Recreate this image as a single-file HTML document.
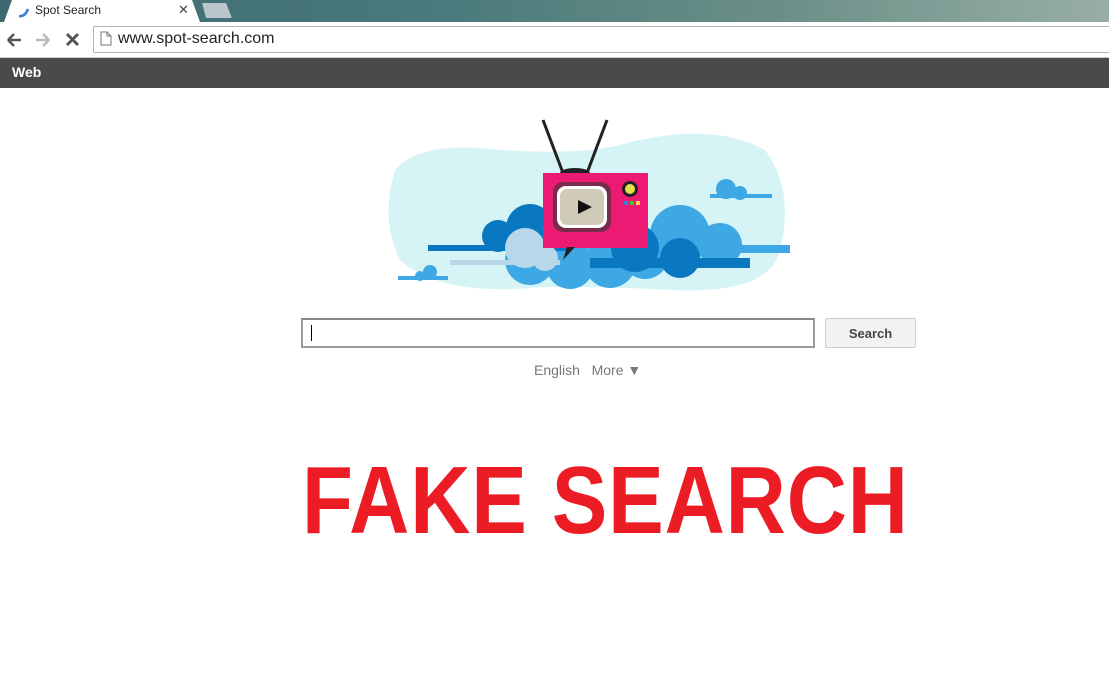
<!DOCTYPE html>
<html><head><meta charset="utf-8"><style>
body{margin:0;width:1109px;height:692px;overflow:hidden;background:#fff;font-family:"Liberation Sans",Arial,sans-serif;position:relative}
.tabbar{position:absolute;left:0;top:0;width:1109px;height:22px;background:linear-gradient(90deg,#3d6a72 0%,#4a7a7c 40%,#6a8f86 70%,#98aea8 100%)}
.tab{position:absolute;left:4px;top:0;width:196px;height:22px;background:#fff;clip-path:polygon(0 100%,8px 0,188px 0,196px 100%)}
.tab2{position:absolute;left:202px;top:3px;width:30px;height:15px;background:#b9c6cc;clip-path:polygon(0 0,24px 0,30px 100%,4px 100%);border-radius:2px}
.toolbar{position:absolute;left:0;top:22px;width:1109px;height:35px;background:#fff;border-bottom:1px solid #ccc}
.omni{position:absolute;left:93px;top:26px;width:1030px;height:25px;border:1px solid #b5b5b5;border-radius:2px;background:#fff}
.url{position:absolute;left:118px;top:30px;font-size:16px;color:#222}
.dark{position:absolute;left:0;top:58px;width:1109px;height:30px;background:#4a4a4a}
.web{position:absolute;left:12px;top:64px;color:#fff;font-weight:bold;font-size:14px}
.input{position:absolute;left:301px;top:318px;width:510px;height:26px;border:2px solid #9a9a9a;border-top-color:#888;background:#fff}
.caret{position:absolute;left:311px;top:325px;width:1px;height:16px;background:#000}
.btn{position:absolute;left:825px;top:318px;width:89px;height:28px;border:1px solid #ccc;background:#f2f2f2;border-radius:2px;font-size:13px;font-weight:bold;color:#444;text-align:center;line-height:29px}
.links{position:absolute;left:534px;top:362px;font-size:14px;color:#777}
.fake{position:absolute;left:302px;top:453px;font-size:96px;font-weight:bold;color:#ec1c24;white-space:nowrap;transform:scaleX(0.868);transform-origin:left top;font-family:"Liberation Sans",sans-serif;line-height:1;letter-spacing:1px}
</style></head><body>
<div class="tabbar"></div>
<div class="tab"></div>
<svg style="position:absolute;left:17px;top:5px" width="14" height="14"><path d="M2 11 Q8 12 11 4" stroke="#3a7fd5" stroke-width="2.5" fill="none"/></svg>
<div style="position:absolute;left:35px;top:3px;font-size:12px;color:#222">Spot Search</div>
<div style="position:absolute;left:178px;top:2px;font-size:13px;color:#444">✕</div>
<div class="tab2"></div>
<div class="toolbar"></div>
<svg style="position:absolute;left:6px;top:31px" width="80" height="18">
<path d="M2 9H15M2 9L8 3M2 9L8 15" stroke="#555" stroke-width="2.5" fill="none"/>
<path d="M30 9H43M43 9L37 3M43 9L37 15" stroke="#bbb" stroke-width="2.5" fill="none"/>
<path d="M61 3L72 14M72 3L61 14" stroke="#555" stroke-width="3" fill="none"/>
</svg>
<div class="omni"></div>
<svg style="position:absolute;left:100px;top:31px" width="12" height="15"><path d="M1 1H7L11 5V14H1Z M7 1V5H11" stroke="#777" fill="#fff"/></svg>
<div class="url">www.spot-search.com</div>
<div class="dark"></div>
<div class="web">Web</div>
<svg style="position:absolute;left:380px;top:110px" width="420" height="190" viewBox="0 0 420 190">
<path d="M15 60 Q40 30 120 40 Q200 45 240 35 Q330 10 385 40 Q415 80 400 140 Q390 185 290 180 Q200 175 150 178 Q60 185 20 150 Q0 110 15 60Z" fill="#d6f4f5"/>
<g fill="#3ea8e5">
<circle cx="150" cy="150" r="25"/><circle cx="190" cy="155" r="24"/><circle cx="230" cy="152" r="26"/><circle cx="265" cy="145" r="24"/>
<circle cx="300" cy="125" r="30"/><circle cx="340" cy="135" r="22"/><rect x="280" y="135" width="130" height="8"/>
<circle cx="346" cy="79" r="10"/><circle cx="360" cy="83" r="7"/><rect x="330" y="84" width="62" height="4"/>
<circle cx="50" cy="162" r="7"/><circle cx="40" cy="166" r="5"/><rect x="18" y="166" width="50" height="4"/>
</g>
<g fill="#0a78c0">
<circle cx="150" cy="118" r="24"/><circle cx="118" cy="126" r="16"/><rect x="48" y="135" width="140" height="6"/>
<circle cx="255" cy="138" r="24"/><circle cx="300" cy="148" r="20"/><rect x="210" y="148" width="160" height="10"/>
</g>
<g fill="#b8d8ea"><circle cx="145" cy="138" r="20"/><circle cx="165" cy="148" r="13"/><rect x="70" y="150" width="110" height="5"/></g>
<path d="M183 63 L163 10 M207 63 L227 10" stroke="#222" stroke-width="3"/>
<ellipse cx="195" cy="63" rx="15" ry="5" fill="#222"/>
<rect x="163" y="63" width="105" height="75" fill="#ed1a73"/>
<path d="M187 137 L183 150 L195 137Z" fill="#222"/>
<rect x="173" y="72" width="58" height="50" rx="10" fill="#7a2b4c"/>
<rect x="177" y="76" width="50" height="42" rx="9" fill="#fff"/>
<rect x="180" y="79" width="44" height="36" rx="7" fill="#cfcbb8"/>
<path d="M198 90 L212 97 L198 104Z" fill="#111"/>
<circle cx="250" cy="79" r="8" fill="#222"/><circle cx="250" cy="79" r="5" fill="#e7e04a"/>
<rect x="244" y="91" width="4" height="4" fill="#3a7fd5"/><rect x="250" y="91" width="4" height="4" fill="#3c3"/><rect x="256" y="91" width="4" height="4" fill="#fc5"/>
</svg>
<div class="input"></div>
<div class="caret"></div>
<div class="btn">Search</div>
<div class="links">English&nbsp;&nbsp;&nbsp;More ▼</div>
<div class="fake">FAKE SEARCH</div>
</body></html>
